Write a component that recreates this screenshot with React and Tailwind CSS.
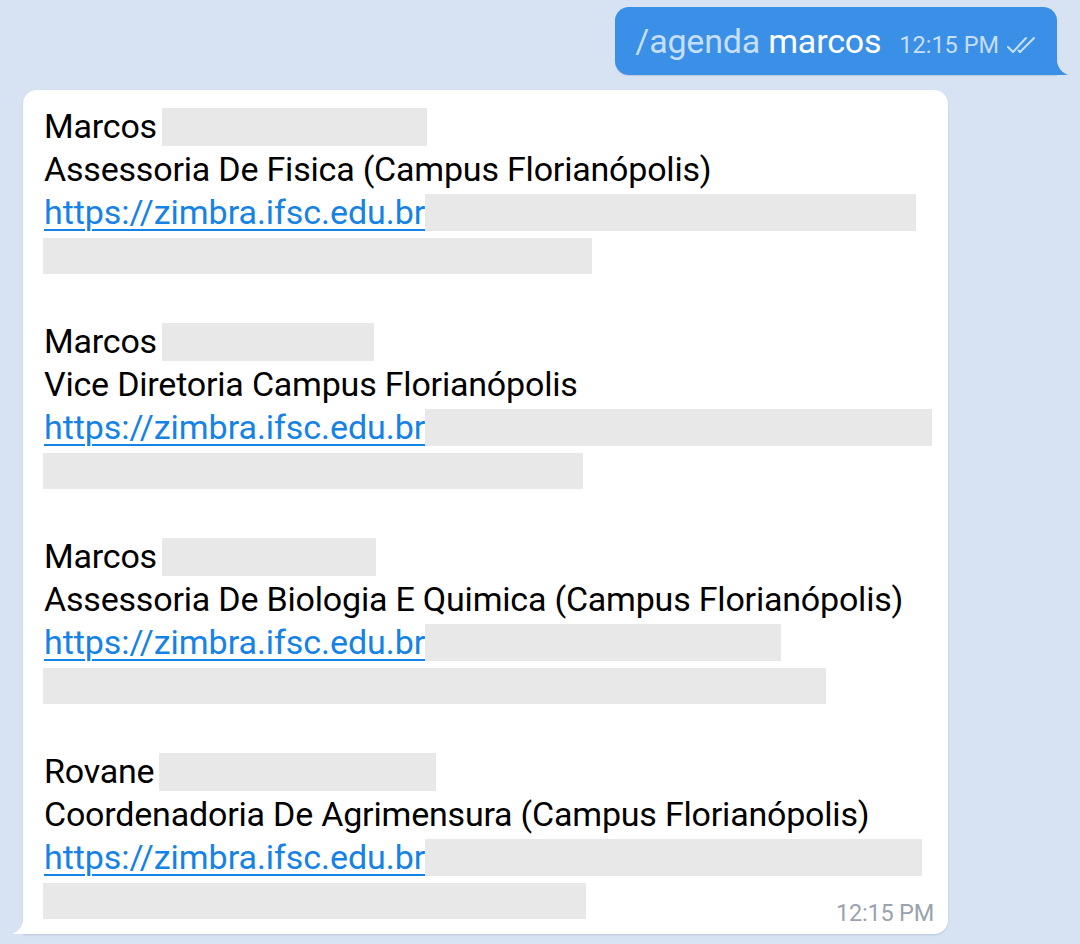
import React from 'react';

const entries = [
  { name: 'Marcos', nameBox: 265, unit: 'Assessoria De Fisica (Campus Florianópolis)', linkBox: 491, lastBox: 549 },
  { name: 'Marcos', nameBox: 212, unit: 'Vice Diretoria Campus Florianópolis', linkBox: 507, lastBox: 540 },
  { name: 'Marcos', nameBox: 214, unit: 'Assessoria De Biologia E Quimica (Campus Florianópolis)', linkBox: 356, lastBox: 783 },
  { name: 'Rovane', nameBox: 277, unit: 'Coordenadoria De Agrimensura (Campus Florianópolis)', linkBox: 497, lastBox: 543 },
];

const Redacted = ({ width, className = '' }) => (
  <span className={`inline-block shrink-0 bg-[#e8e8e8] ${className}`} style={{ width }} />
);

const DoubleCheck = () => (
  <svg width="38" height="22" viewBox="0 0 38 22" fill="none" stroke="#c9e0f8" strokeWidth="2" strokeLinecap="round" strokeLinejoin="round">
    <path d="M3 13 L8 18 L21 4" />
    <path d="M15 18 L29 4" />
    <path d="M15 18 L13.5 16.5" />
  </svg>
);

export default function App() {
  return (
    <div className="min-h-[944px] w-[1080px] bg-[#d7e3f2] font-['Roboto','Liberation_Sans',sans-serif] overflow-hidden">
      <div className="flex justify-end pt-[7px] pr-[23px]">
        <div className="relative">
          <div className="flex items-center h-[68px] bg-[#3a8fe7] rounded-[14px] rounded-br-none pl-[20px] pr-[14px] shadow-[0_1px_1px_rgba(90,120,160,0.25)]">
            <span className="text-[34px] leading-none tracking-[-0.2px]">
              <span className="text-[#c6def8]">/agenda</span>
              <span className="text-white"> marcos</span>
            </span>
            <span className="ml-[18px] mt-[10px] text-[23.5px] leading-none text-[#c6def8]">12:15 PM</span>
            <span className="ml-[6px] mt-[8px]"><DoubleCheck /></span>
          </div>
          <svg className="absolute bottom-0 right-[-12px]" width="13" height="22" viewBox="0 0 13 22">
            <path d="M0 0 C0 12 4 19 12 22 L0 22 Z" fill="#3a8fe7" />
          </svg>
        </div>
      </div>

      <div className="relative ml-[23px] mt-[15px] w-[925px]">
        <svg className="absolute bottom-0 left-[-12px]" width="13" height="22" viewBox="0 0 13 22">
          <path d="M13 0 C13 12 9 19 1 22 L13 22 Z" fill="#ffffff" />
        </svg>
        <div className="bg-white rounded-[14px] rounded-bl-none pt-[15px] pb-[12px] pl-[20px] pr-[14px] shadow-[0_1px_2px_rgba(90,120,160,0.25)] text-[34px] leading-[43px] text-black tracking-[-0.2px]">
          {entries.map((e, i) => (
            <div key={i} className={i > 0 ? 'mt-[43px]' : ''}>
              <div className="flex items-center h-[43px]">
                <span className="pl-[1px]">{e.name}</span>
                <Redacted width={e.nameBox} className="ml-[5px] h-[38px]" />
              </div>
              <div className="h-[43px] pl-[1px] whitespace-nowrap">{e.unit}</div>
              <div className="flex items-center h-[43px]">
                <span className="pl-[1px] text-[#1582e6] tracking-[-0.05px] underline decoration-2 underline-offset-[5px]">https://zimbra.ifsc.edu.br</span>
                <Redacted width={e.linkBox} className="h-[37px]" />
              </div>
              <div className="flex items-center h-[43px]">
                <Redacted width={e.lastBox} className="h-[36px]" />
                {i === entries.length - 1 && (
                  <span className="ml-auto self-end translate-y-[3px] text-[23.5px] leading-none text-[#9aa3ad]">12:15 PM</span>
                )}
              </div>
            </div>
          ))}
        </div>
      </div>
    </div>
  );
}
